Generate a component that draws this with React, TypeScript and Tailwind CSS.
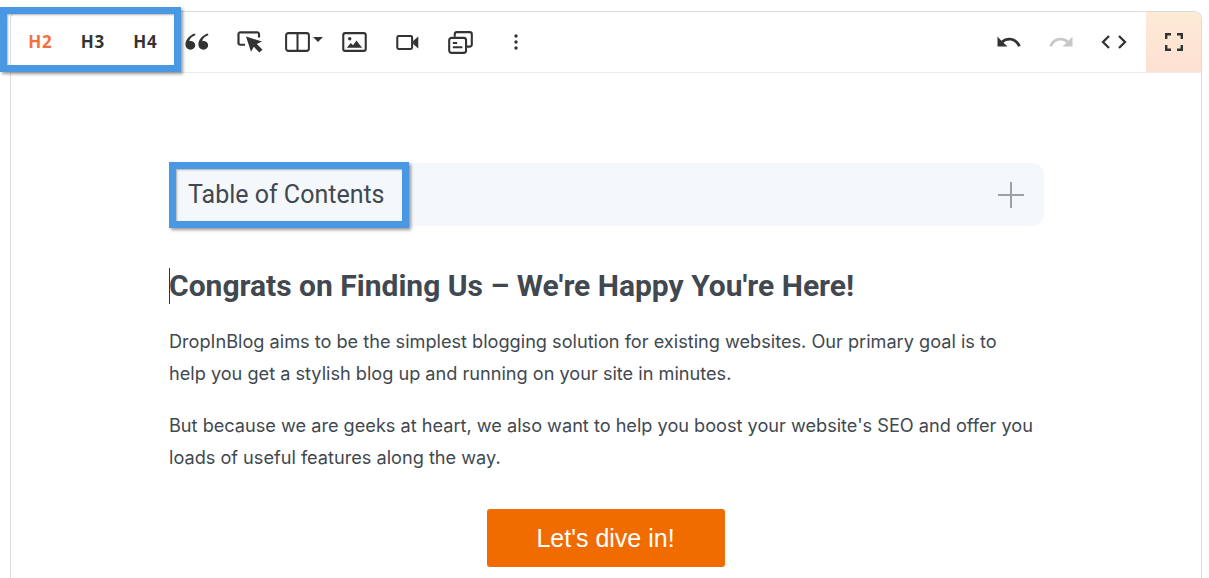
import React from "react";

const dark = "#333333";

function Btn({ children, w = "w-[52.5px]" }: { children: React.ReactNode; w?: string }) {
  return <div className={`${w} h-full flex items-center justify-center shrink-0`}>{children}</div>;
}

function H({ t, c }: { t: string; c: string }) {
  return (
    <span className="text-[17px] font-bold tracking-[0.6px] [font-family:'Open_Sans','Noto_Sans',sans-serif]" style={{ color: c }}>
      {t}
    </span>
  );
}

const Quote = () => (
  <svg width="24" height="18" viewBox="0 0 26 20" fill={dark} preserveAspectRatio="none" className="mr-[2px]">
    <path d="M11.5 2.2C7.5 3.6 5.2 6.2 4.6 9.2c.5-.2 1-.3 1.5-.3 2.8 0 5 2.1 5 4.8S8.900 18.500 6 18.500 .5 16.300 .5 12.600C.5 7.300 4.500 2.800 10.500 .5z" />
    <path d="M25.500 2.200C21.500 3.600 19.200 6.200 18.600 9.200c.5-.2 1-.3 1.500-.3 2.800 0 5 2.100 5 4.800s-2.200 4.800-5.100 4.800-5.500-2.200-5.500-5.900C14.500 7.300 18.500 2.800 24.500 .5z" />
  </svg>
);

const Cursor = () => (
  <svg width="26" height="22" viewBox="0 0 26 24" fill="none" preserveAspectRatio="none">
    <path d="M8 15H3.500A1.800 1.800 0 0 1 1.500 13V3.500A1.800 1.800 0 0 1 3.500 1.500H20A1.800 1.800 0 0 1 22 3.500V7" stroke={dark} strokeWidth="2.200" />
    <path d="M9 6L25 11.500L19.800 14.300L25.500 20.400L22.300 23.500L16.800 17.200L14 22.500z" fill={dark} />
  </svg>
);

const Columns = () => (
  <div className="flex items-center gap-[3px] ml-[2px]">
    <svg width="25" height="20" viewBox="0 0 27 21" fill="none" preserveAspectRatio="none">
      <rect x="1.200" y="1.200" width="24.600" height="18.600" rx="2.500" stroke={dark} strokeWidth="2.200" />
      <path d="M13.500 1v19" stroke={dark} strokeWidth="2.200" />
    </svg>
    <svg width="10" height="5" viewBox="0 0 10 5" className="mb-[6px]">
      <path d="M0 0h10L5 5z" fill={dark} />
    </svg>
  </div>
);

const ImageIcon = () => (
  <svg width="25" height="20" viewBox="0 0 26 21" fill="none" className="mr-[1px]">
    <rect x="1.200" y="1.200" width="23.600" height="18.600" rx="2" stroke={dark} strokeWidth="2.200" />
    <circle cx="8" cy="7" r="1.800" fill={dark} />
    <path d="M5 16.500l4-5 2.500 2.500 3.500-5 6 7.500z" fill={dark} />
  </svg>
);

const Video = () => (
  <svg width="23" height="15" viewBox="0 0 24 16" fill="none">
    <rect x="1.100" y="1.100" width="15.800" height="13.800" rx="1.500" stroke={dark} strokeWidth="2.200" />
    <path d="M18 6.300L23.500 1.500v13L18 9.700z" fill={dark} />
  </svg>
);

const Gallery = () => (
  <svg width="25" height="23" viewBox="0 0 26 24" fill="none">
    <rect x="1.200" y="7.200" width="17.600" height="15.600" rx="2.500" stroke={dark} strokeWidth="2.200" />
    <path d="M7 6V3.500A2.300 2.300 0 0 1 9.300 1.200H22.500A2.300 2.300 0 0 1 24.800 3.500V14A2.300 2.300 0 0 1 22.500 16.300H19.500" stroke={dark} strokeWidth="2.200" />
    <path d="M5 12.500h4.500M5 17h10" stroke={dark} strokeWidth="2" />
  </svg>
);

const Dots = () => (
  <svg width="4" height="16" viewBox="0 0 4 16" fill={dark}>
    <circle cx="2" cy="2" r="1.700" />
    <circle cx="2" cy="8" r="1.700" />
    <circle cx="2" cy="14" r="1.700" />
  </svg>
);

const Undo = ({ color, flip }: { color: string; flip?: boolean }) => (
  <svg width="24" height="12" viewBox="0 0 24 12" fill={color} style={flip ? { transform: "scaleX(-1)" } : undefined}>
    <path d="M0.500 0.500V10.500H10.500L6.500 6.800C8.200 5.300 10 4.500 12.300 4.500 16.300 4.500 19.700 7 21 10.800L23.700 9.900C22 5 17.600 1.700 12.300 1.700 9.300 1.700 6.500 2.900 4.400 4.700z" />
  </svg>
);

const Code = () => (
  <svg width="26" height="14" viewBox="0 0 26 14" fill="none" stroke={dark} strokeWidth="2.300">
    <path d="M8 1L2 7l6 6M18 1l6 6-6 6" />
  </svg>
);

const Full = () => (
  <svg width="18" height="18" viewBox="0 0 18 18" fill="none" stroke={dark} strokeWidth="2.400">
    <path d="M1.200 6V1.200H6M12 1.200h4.800V6M16.800 12v4.800H12M6 16.800H1.200V12" />
  </svg>
);

export default function App() {
  return (
    <div className="relative w-[1209px] h-[578px] overflow-hidden bg-white">
      <div className="absolute left-0 top-[7px] w-[181px] h-[65px] border-[7px] border-[#4a98e3] shadow-[2px_2px_3px_rgba(0,0,0,0.4),inset_1px_1px_2px_rgba(0,0,0,0.3)] z-10" />

      <div className="ml-[10px] mt-[11px] w-[1192px] h-[567px] border border-b-0 border-[#dcdcdc] rounded-t-[8px] overflow-hidden">
        <div className="flex h-[61px] items-stretch border-b border-[#ececec] pl-[3px]">
          <Btn><H t="H2" c="#f2713a" /></Btn>
          <Btn><H t="H3" c={dark} /></Btn>
          <Btn><H t="H4" c={dark} /></Btn>
          <Btn><Quote /></Btn>
          <Btn><Cursor /></Btn>
          <Btn><Columns /></Btn>
          <Btn><ImageIcon /></Btn>
          <Btn><Video /></Btn>
          <Btn><Gallery /></Btn>
          <Btn w="w-[58px]"><Dots /></Btn>
          <div className="flex-1" />
          <Btn><Undo color={dark} /></Btn>
          <Btn><Undo color="#c8c8c8" flip /></Btn>
          <Btn><Code /></Btn>
          <div className="w-[6px]" />
          <Btn w="w-[55px]">
            <div className="w-full h-full flex items-center justify-center bg-gradient-to-b from-[#fdebd6] to-[#fde0d2]">
              <Full />
            </div>
          </Btn>
        </div>

        <div className="pl-[158px] pt-[90px] w-[1033px]">
          <div className="relative h-[63px] w-[875px] rounded-[12px] bg-[#f4f8fb] flex items-center justify-between pl-[19px] pr-[20px]">
            <span className="text-[25px] leading-[1] text-[#41484f] [font-family:Roboto,sans-serif]">Table of Contents</span>
            <svg width="26" height="26" viewBox="0 0 26 26" stroke="#9ba1a6" strokeWidth="2">
              <path d="M13 0v26M0 13h26" />
            </svg>
            <div className="absolute left-0 top-[-1px] w-[240px] h-[66px] border-[7px] border-[#4a98e3] shadow-[2px_2px_3px_rgba(0,0,0,0.4),inset_1px_1px_2px_rgba(0,0,0,0.3)]" />
          </div>

          <h2 className="relative mt-[42px] text-[30px] leading-[36px] font-bold text-[#41484f] [font-family:Roboto,sans-serif]">
            <span className="absolute left-0 top-0 w-px h-[36px] bg-[#333]" />
            Congrats on Finding Us – We're Happy You're Here!
          </h2>

          <p className="mt-[21px] w-[866px] text-[18.15px] leading-[32px] text-[#41484f] [font-family:Inter,sans-serif]">
            DropInBlog aims to be the simplest blogging solution for existing websites. Our primary goal is to help you get a stylish blog up and running on your site in minutes.
          </p>
          <p className="mt-[20px] w-[866px] text-[18.15px] leading-[32px] text-[#41484f] [font-family:Inter,sans-serif]">
            But because we are geeks at heart, we also want to help you boost your website's SEO and offer you loads of useful features along the way.
          </p>

          <div className="mt-[36px] w-[873px] flex justify-center">
            <a className="w-[238px] h-[58px] pt-[1px] rounded-[3px] bg-[#f16c00] text-white text-[25px] flex items-center justify-center [font-family:'Liberation_Sans',Arial,sans-serif]">
              Let's dive in!
            </a>
          </div>
        </div>
      </div>
    </div>
  );
}
